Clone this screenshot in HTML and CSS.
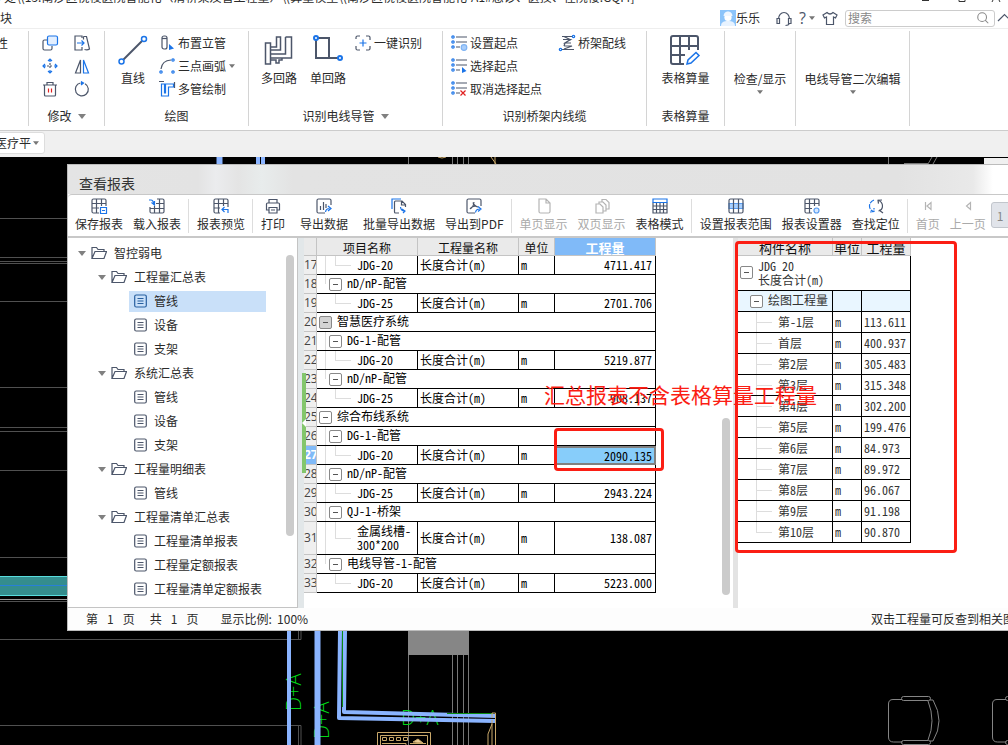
FILE: index.html
```html
<!DOCTYPE html>
<html lang="zh-CN">
<head>
<meta charset="utf-8">
<title>查看报表</title>
<link rel="stylesheet" href="styles.css">
</head>
<body>
<svg class="defs" aria-hidden="true">
  <symbol id="folder" viewBox="0 0 16 14"><path d="M1 12.500V1.500h4.500l1.500 2h6v2M1 12.500l3-7h11.500l-2.500 7z"/></symbol>
  <symbol id="doc" viewBox="0 0 13 14"><rect x=".7" y="1" width="11.600" height="12" rx="1.500"/><path d="M3.500 4.500h6M3.500 7h6M3.500 9.500h6"/></symbol>
  <symbol id="down" viewBox="0 0 8 5"><path d="M0 0h8L4 5z"/></symbol>
  <symbol id="start" viewBox="0 0 16 16"><path d="M5 2h11M5 7h11M5 12h4"/><g class="blue"><circle cx="2" cy="2" r="1.200"/><circle cx="2" cy="7" r="1.200"/><circle cx="2" cy="12" r="1.200"/></g></symbol>
</svg>

<header class="titlebar">
  <div class="path">步处\(15.南沙区桡棱医院智能化（清桥架及管工程量）\(算量模型\(南沙区桡棱医院智能化-A1#急诊、医技、住院楼.GQI4]</div>
  <div class="menu-row">
    <span class="menu-tab">块</span>
    <div class="account">
      <svg class="avatar" viewBox="0 0 16 16"><rect width="16" height="16" fill="#8cc4fa"/><path d="M1 16c0-4 3-5 7-5s7 1 7 5z" fill="#e8f3ff"/><circle cx="8" cy="7.500" r="3.600" fill="#fff"/><path d="M3.500 6C4 2.500 6 1.500 8 1.500S12 2.500 12.500 6z" fill="#eef6ff"/></svg>
      <span class="user">乐乐</span>
      <button class="plain" aria-label="客服"><svg class="ic" viewBox="0 0 16 16"><path d="M2.500 9a5.500 6.500 0 0 1 11 0M1 8.500h2.500v5H1zM12.500 8.500H15v5h-2.500zM13.500 13.500q-1 2-4 2"/></svg></button>
      <button class="plain help" aria-label="帮助">?<svg class="tri" aria-hidden="true"><use href="#down"/></svg></button>
      <button class="plain" aria-label="皮肤"><svg class="ic" viewBox="0 0 16 16"><path d="M5 2.500q3 3 6 0l4 2.500-1.500 3-2-1v7.500h-7V7l-2 1L1 5z"/></svg></button>
      <label class="search"><input type="text" placeholder="搜索" aria-label="搜索"><svg class="ic" viewBox="0 0 16 16"><circle cx="7" cy="7" r="5"/><path d="M10.500 10.500l3.500 3.500"/></svg></label>
      <button class="plain fold" aria-label="收起"><svg class="ic" viewBox="0 0 16 16"><path d="M1 11l6.500-6.500L14 11"/></svg></button>
    </div>
  </div>
  <svg class="winctl" viewBox="0 0 90 4"><path d="M4 .5h7M41 0v1.500h6V0M75 0l-1 2M81 0l1 2"/></svg>
</header>

<section class="ribbon">
  <div class="group g-prop"><div class="tools"><button class="row">性</button></div></div>
  <div class="group g-edit">
    <div class="tools edit-grid">
      <button class="plain" aria-label="复制"><svg class="ic" viewBox="0 0 16 16"><path d="M5 5H2.500Q1 5 1 6.500v7Q1 15 2.500 15h6q1.500 0 1.500-1.500V11"/><rect class="blue" x="5.500" y="1" width="10" height="9" rx="1.500" fill="#e3efff"/></svg></button>
      <button class="plain" aria-label="延伸"><svg class="ic" viewBox="0 0 16 16"><path d="M8 3V1H1v14h7v-3M9.500 1.500h3l3 12.500q-2 1.500-5 .5M9.500 1.500v3"/><path class="blue" d="M3 8h7M7.500 5.500L10 8l-2.500 2.500"/></svg></button>
      <button class="plain" aria-label="移动"><svg class="ic" viewBox="0 0 16 16"><path d="M8 5v6M5 8h6" stroke-dasharray="2 1"/><path class="blue" d="M8 1v3M8 12v3M1 8h3M12 8h3M6 3l2-2 2 2M6 13l2 2 2-2M3 6L1 8l2 2M13 6l2 2-2 2"/></svg></button>
      <button class="plain" aria-label="镜像"><svg class="ic" viewBox="0 0 16 16"><path d="M6.500 2v13H1.500z"/><path class="blue" d="M9.500 2v13h5z"/></svg></button>
      <button class="plain" aria-label="删除"><svg class="ic" viewBox="0 0 16 16"><path d="M1 4h14M5 4V1.500h6V4M2.500 4v10q0 1 1 1h9q1 0 1-1V4"/><path class="red" d="M6.500 7.500v4M9.500 7.500v4"/></svg></button>
      <button class="plain" aria-label="旋转"><svg class="ic" viewBox="0 0 16 16"><path d="M11 2.700A6.500 6.500 0 1 1 6.500 2"/><path class="blue" d="M7 .5l2.500 1.500L7 4" fill="#1b6fe0"/></svg></button>
    </div>
    <div class="caption">修改<svg class="tri big"><use href="#down"/></svg></div>
  </div>
  <div class="group g-draw">
    <div class="tools">
      <button class="tall"><svg class="ic lg" viewBox="0 0 30 30"><path d="M5 25L24 6"/><g class="blue thin" fill="#fff"><circle cx="3.500" cy="26.500" r="2.500"/><circle cx="26" cy="4" r="2.500"/></g></svg>直线</button>
      <div class="stack">
        <button class="row"><svg class="ic" viewBox="0 0 16 16"><rect x="3" y="1" width="5" height="13" rx="2"/><path d="M3 3.500h5"/><path class="solid" d="M10 9v6l5-1.500z"/></svg>布置立管</button>
        <button class="row"><svg class="ic" viewBox="0 0 16 16"><path d="M2 11q1-8.500 10-9"/><g class="blue"><circle cx="2" cy="14" r="1.200"/><circle cx="14" cy="2" r="1.200"/><circle cx="14" cy="14" r="1.200"/></g></svg>三点画弧<svg class="tri"><use href="#down"/></svg></button>
        <button class="row"><svg class="ic" viewBox="0 0 16 16"><path d="M0 .5h5M15.500 1v6"/><path class="blue" d="M2.500 3v12h7V6h5V3h-8v9h-1V3z"/></svg>多管绘制</button>
      </div>
    </div>
    <div class="caption">绘图</div>
  </div>
  <div class="group g-wire">
    <div class="tools">
      <button class="tall"><svg class="ic lg thin" viewBox="0 0 30 30"><path d="M1.500 8h5v21h-5zM6.500 12h6V2h4v13h-10M21.500 2h6v21h-9.500M6.500 19h15V2M6.500 23h11.500v2h-3v3h-3v-3H6.500"/></svg>多回路</button>
      <button class="tall"><svg class="ic lg" viewBox="0 0 30 30"><path d="M3 5v18h13V3H5M16 23h9"/><g class="blue" fill="#fff"><circle cx="3" cy="3" r="2"/><circle cx="27" cy="23" r="2"/></g></svg>单回路</button>
      <div class="stack"><button class="row"><svg class="ic" viewBox="0 0 16 16"><path d="M1 4V2.500Q1 1 2.500 1H5M11 1h2.500Q15 1 15 2.500V5M15 11v2.500q0 1.500-1.500 1.500H11M5 15H2.500Q1 15 1 13.500V11"/><path class="blue" d="M8 4.500v7M4.500 8h7"/></svg>一键识别</button></div>
    </div>
    <div class="caption">识别电线导管<svg class="tri big"><use href="#down"/></svg></div>
  </div>
  <div class="group g-tray">
    <div class="tools">
      <div class="stack">
        <button class="row"><svg class="ic" viewBox="0 0 16 16"><use href="#start"/><circle cx="13" cy="12.500" r="2.800" fill="#a8cdfa" stroke="#7db2f3"/></svg>设置起点</button>
        <button class="row"><svg class="ic" viewBox="0 0 16 16"><use href="#start"/><path class="solid" d="M11 9v6l4.500-2z"/></svg>选择起点</button>
        <button class="row"><svg class="ic" viewBox="0 0 16 16"><use href="#start"/><path class="red" d="M9.500 9.500l5 5M14.500 9.500l-5 5"/></svg>取消选择起点</button>
      </div>
      <div class="stack"><button class="row"><svg class="ic" viewBox="0 0 16 16"><path d="M3 1.500h10M5 1.500L12 5M4 4.500h7.500L6 8h6M5 11h8L5 14M2 14.500h13M6 8l-1 3"/><g class="blue"><circle cx="14.500" cy="1.500" r="1.200"/><circle cx="1.500" cy="14.500" r="1.200"/></g></svg>桥架配线</button></div>
    </div>
    <div class="caption">识别桥架内线缆</div>
  </div>
  <div class="group g-sheet">
    <div class="tools"><button class="tall"><svg class="ic lg" viewBox="0 0 30 30"><path d="M14 29H3Q1 29 1 27V3Q1 1 3 1h23q2 0 2 2v12M1 11h27M1 20h14M10 1v28M19 1v14"/><path class="blue thin" d="M17 29l1-4 8-7.500 3 3-8 7.500z"/></svg>表格算量</button></div>
    <div class="caption">表格算量</div>
  </div>
  <div class="group g-check"><button class="menu">检查/显示<svg class="tri"><use href="#down"/></svg></button></div>
  <div class="group g-second"><button class="menu">电线导管二次编辑<svg class="tri"><use href="#down"/></svg></button></div>
</section>

<div class="subbar"><button class="layer">医疗平<svg class="tri"><use href="#down"/></svg></button></div>

<main class="canvas">
  <svg class="drawing" viewBox="0 157 1008 588" width="1008" height="588" aria-hidden="true">
    <g fill="none" stroke="#505050">
      <path d="M0 218.500h68M0 257.500h68M0 261.500h68M0 263.500h68M0 301.500h68M0 387.500h68M0 427.500h68M0 431.500h68M0 470.500h68M0 557.500h68M0 601.500h68M0 639.500h301V630M298.500 630v9M0 725.500h301V745M298.500 726v19"/>
      <path d="M408.500 157v8M408.500 655v90M452.500 157v8M452.500 655v90M457.500 157v8M457.500 655v90M463.500 157v8M463.500 655v90M468.500 157v8M468.500 630v115M888.500 157v8M904 163.500h24M928 164l4-7M933 164l4-7" stroke="#777"/>
    </g>
    <path d="M0 576h68v20H0z" fill="#348d8d"/><path d="M0 576.500h68M0 595.500h68" stroke="#58dddd"/><path d="M0 585.500h68" stroke="#287fd8"/><path d="M0 599.500h68" stroke="#999"/>
    <path d="M408 630h61v25h-61z" fill="#868686"/>
    <path d="M984 158h24v8h-24z" fill="#f0f0f0"/>
    <g class="cad-label">
      <text transform="translate(301 711) rotate(-90)">D+A</text>
      <text transform="translate(329 739) rotate(-90)">D+A</text>
      <text x="401" y="725">D+A</text>
    </g>
    <g fill="none" stroke="#8ab4ff" stroke-width="4" stroke-linejoin="round">
      <path d="M289 630v115M340 630l-1 88 156 3M345 630l-1 82 152 4M258 157v8M263 157v8"/><path d="M317.500 630v115M219.500 157v8" stroke-width="6"/>
    </g>
    <path d="M342.500 630v77M447 713.500h46" stroke="#0a8a10"/>
    <g fill="none" stroke="#c9a86a">
      <path d="M377.500 745v-12.500h53V745M380.500 745v-9.500h47V745M382 743.500h24v2M410 743.500h16M495.500 745v-32h-3.500v5M492 724l-4 10v11M492 720v25M491 157l5 7M495 157v8"/>
      <path d="M382.500 737.500h4v3h-4zM389.500 737.500h4v3h-4zM396.500 737.500h4v3h-4zM403.500 737.500h4v3h-4z"/><path d="M413 742l5-3 5 4z" fill="#e8cd9a"/><path d="M438 157q4 2 8 0"/>
    </g>
    <g fill="none" stroke="#858585">
      <g id="chair"><path d="M902 699.500h-9q-4.500 0-4.500 4.500v33q0 5 5 5h9"/><rect x="901.500" y="696.500" width="29" height="4" rx="2"/><rect x="901.500" y="740.500" width="29" height="4" rx="2"/><path d="M928 701q8 20 0 39M930 700h3q12 21 0 41h-3"/></g>
      <use href="#chair" x="104"/>
    </g>
  </svg>

  <section class="dialog" aria-label="查看报表">
    <h1 class="dialog-title">查看报表</h1>
    <div class="toolbar">
      <button class="tool"><svg class="ic" viewBox="0 0 16 16"><path d="M8 15H2.500Q1 15 1 13.500v-11Q1 1 2.500 1h11Q15 1 15 2.500V8M1 5.500h14M1 10h7M5.500 1v14M10.500 1v7"/><path class="blue" d="M9.500 9.500h6v6h-6zM11 12.500h3"/></svg>保存报表</button>
      <button class="tool"><svg class="ic" viewBox="0 0 16 16"><path d="M8 1h5.500Q15 1 15 2.500v11q0 1.500-1.500 1.500h-11Q1 15 1 13.500V9M7 5.500h8M1 10.500h14M5.500 8v7M10.500 1v14"/><path class="blue" d="M0 2h2q2 0 3 4M2.500 4.500L5.500 7V3"/></svg>载入报表</button>
      <i class="sep"></i>
      <button class="tool"><svg class="ic" viewBox="0 0 16 16"><path d="M7 15H2.500Q1 15 1 13.500v-11Q1 1 2.500 1h11Q15 1 15 2.500V9M1 5.500h14M1 10h6M5.500 1v14M10.500 1v7"/><path class="blue" d="M15 15v-3.500H9M11.500 9L9 11.500l2.500 2.500"/></svg>报表预览</button>
      <i class="sep"></i>
      <button class="tool print"><svg class="ic" viewBox="0 0 16 16"><path d="M4 5V1.500h8V5M4 12H1.500V6Q1.500 5 2.500 5h11q1 0 1 1v6H12M4 9.500h8V15H4zM6 12h4"/></svg>打印</button>
      <button class="tool export"><svg class="ic" viewBox="0 0 16 16"><path d="M9 15H2.500Q1 15 1 13.500v-11Q1 1 2.500 1h11Q15 1 15 2.500V7M4.500 12V8M7.500 12V4M10 10V6"/><path class="blue" d="M9.500 14q.5-3.500 4-3.500M12 8l3 2.500-3 2.500"/></svg>导出数据</button>
      <button class="tool"><svg class="ic" viewBox="0 0 16 16"><path class="blue" d="M1 11V1h9"/><path d="M8 15H4.500q-1 0-1-1V4q0-1 1-1H11l3.500 3.500V9M10.500 3v4h4"/><path class="blue" d="M9.500 9q.5 4 4 4M11 11l3 2-2 2"/></svg>批量导出数据</button>
      <button class="tool"><svg class="ic" viewBox="0 0 16 16"><path d="M9 15H2.500Q1 15 1 13.500v-11Q1 1 2.500 1h11Q15 1 15 2.500V8M4 11q3-1 4-7M7 4.500Q8 8 12 9M4 11q2-3 6-3"/><path class="blue" d="M9.500 14.500q.5-3.500 4-3.500M12 8.500l3 2.500-3 2.500"/></svg>导出到PDF</button>
      <i class="sep"></i>
      <button class="tool" disabled><svg class="ic" viewBox="0 0 16 16"><path d="M3 1h7l4 4v8.500q0 1.500-1.500 1.500h-8Q3 15 3 13.500zM10 1v4h4"/></svg>单页显示</button>
      <button class="tool" disabled><svg class="ic" viewBox="0 0 16 16"><path d="M2 6h4l3 3v6H2zM5 6V4h4l3 3v6H9M8 4V1.500h4l3 3V11h-3"/></svg>双页显示</button>
      <button class="tool"><svg class="ic" viewBox="0 0 16 16"><path d="M1 4.500V15h14V4.500M1 8h14M1 11.500h14M4.500 4v11M8 4v11M11.500 4v11"/><path class="blue" d="M1 4.500V1h14v3.500z"/></svg>表格模式</button>
      <i class="sep"></i>
      <button class="tool"><svg class="ic" viewBox="0 0 16 16"><path d="M1 5.500h14v5H1z" fill="#a8d0ff" stroke="#5b9df0"/><rect x="1" y="1" width="14" height="14" rx="1.500"/><path d="M5.500 1v14M10.500 1v14"/></svg>设置报表范围</button>
      <button class="tool"><svg class="ic" viewBox="0 0 16 16"><path d="M8 15H2.500Q1 15 1 13.500v-11Q1 1 2.500 1h11Q15 1 15 2.500V8M1 5.500h14M1 10.500h7M5.500 1v14M10.500 1v7"/><circle cx="12.500" cy="12.500" r="2.500" fill="#d6e8ff" stroke="#5b9df0"/></svg>报表设置器</button>
      <button class="tool"><svg class="ic" viewBox="0 0 16 16"><path class="blue" d="M6 2Q1.500 4 1.500 8t4 5.500M2 14l4-.5V10" stroke-dasharray="5 1"/><path d="M10 2q4.500 2 4.500 6t-4 5M14 2l-4 .200.500 3.500M11 12l4 3"/></svg>查找定位</button>
      <i class="sep"></i>
      <button class="tool" disabled><svg class="ic" viewBox="0 0 16 16"><path d="M5.500 4v8M11 4.500v7L7 8z"/></svg>首页</button>
      <button class="tool" disabled><svg class="ic" viewBox="0 0 16 16"><path d="M10.500 4.500v7L6.500 8z"/></svg>上一页</button>
      <input class="page-no" type="text" value="1" aria-label="页码" disabled>
    </div>

    <div class="body">
      <nav class="tree">
        <ul>
          <li class="l0"><svg class="tri big"><use href="#down"/></svg><svg class="folder"><use href="#folder"/></svg>智控弱电</li>
          <li class="l1"><svg class="tri big"><use href="#down"/></svg><svg class="folder"><use href="#folder"/></svg>工程量汇总表</li>
          <li class="l2 active"><a href="#r1"><svg class="doc"><use href="#doc"/></svg>管线</a></li>
          <li class="l2"><a href="#r2"><svg class="doc"><use href="#doc"/></svg>设备</a></li>
          <li class="l2"><a href="#r3"><svg class="doc"><use href="#doc"/></svg>支架</a></li>
          <li class="l1"><svg class="tri big"><use href="#down"/></svg><svg class="folder"><use href="#folder"/></svg>系统汇总表</li>
          <li class="l2"><a href="#r4"><svg class="doc"><use href="#doc"/></svg>管线</a></li>
          <li class="l2"><a href="#r5"><svg class="doc"><use href="#doc"/></svg>设备</a></li>
          <li class="l2"><a href="#r6"><svg class="doc"><use href="#doc"/></svg>支架</a></li>
          <li class="l1"><svg class="tri big"><use href="#down"/></svg><svg class="folder"><use href="#folder"/></svg>工程量明细表</li>
          <li class="l2"><a href="#r7"><svg class="doc"><use href="#doc"/></svg>管线</a></li>
          <li class="l1"><svg class="tri big"><use href="#down"/></svg><svg class="folder"><use href="#folder"/></svg>工程量清单汇总表</li>
          <li class="l2"><a href="#r8"><svg class="doc"><use href="#doc"/></svg>工程量清单报表</a></li>
          <li class="l2"><a href="#r9"><svg class="doc"><use href="#doc"/></svg>工程量定额报表</a></li>
          <li class="l2"><a href="#r10"><svg class="doc"><use href="#doc"/></svg>工程量清单定额报表</a></li>
        </ul>
        <i class="thumb"></i>
      </nav>

      <div class="summary">
        <i class="drawer"></i>
        <table class="grid">
          <colgroup><col class="c-no"><col class="c-item"><col class="c-qty"><col class="c-unit"><col class="c-val"></colgroup>
          <thead><tr><th></th><th>项目名称</th><th>工程量名称</th><th>单位</th><th class="current">工程量</th></tr></thead>
          <tbody>
            <tr><th>17</th><td class="leaf rail">JDG-20</td><td>长度合计(m)</td><td>m</td><td>4711.417</td></tr>
            <tr><th>18</th><td class="sub end" colspan="4"><button class="toggle" aria-label="折叠"></button>nD/nP-配管</td></tr>
            <tr><th>19</th><td class="leaf">JDG-25</td><td>长度合计(m)</td><td>m</td><td>2701.706</td></tr>
            <tr><th>20</th><td class="top" colspan="4"><button class="toggle dark" aria-label="折叠"></button>智慧医疗系统</td></tr>
            <tr><th>21</th><td class="sub" colspan="4"><button class="toggle" aria-label="折叠"></button>DG-1-配管</td></tr>
            <tr><th>22</th><td class="leaf rail">JDG-20</td><td>长度合计(m)</td><td>m</td><td>5219.877</td></tr>
            <tr><th>23</th><td class="sub end" colspan="4"><button class="toggle" aria-label="折叠"></button>nD/nP-配管</td></tr>
            <tr><th>24</th><td class="leaf">JDG-25</td><td>长度合计(m)</td><td>m</td><td>908.137</td></tr>
            <tr><th>25</th><td class="top" colspan="4"><button class="toggle" aria-label="折叠"></button>综合布线系统</td></tr>
            <tr><th>26</th><td class="sub" colspan="4"><button class="toggle" aria-label="折叠"></button>DG-1-配管</td></tr>
            <tr><th class="current">27</th><td class="leaf rail">JDG-20</td><td>长度合计(m)</td><td>m</td><td class="selected">2090.135</td></tr>
            <tr><th>28</th><td class="sub" colspan="4"><button class="toggle" aria-label="折叠"></button>nD/nP-配管</td></tr>
            <tr><th>29</th><td class="leaf rail">JDG-25</td><td>长度合计(m)</td><td>m</td><td>2943.224</td></tr>
            <tr><th>30</th><td class="sub" colspan="4"><button class="toggle" aria-label="折叠"></button>QJ-1-桥架</td></tr>
            <tr class="double"><th>31</th><td class="leaf rail">金属线槽-<br>300*200</td><td>长度合计(m)</td><td>m</td><td>138.087</td></tr>
            <tr><th>32</th><td class="sub end" colspan="4"><button class="toggle" aria-label="折叠"></button>电线导管-1-配管</td></tr>
            <tr><th>33</th><td class="leaf">JDG-20</td><td>长度合计(m)</td><td>m</td><td>5223.000</td></tr>
          </tbody>
        </table>
        <i class="thumb"></i>
      </div>

      <div class="detail">
        <table class="grid">
          <colgroup><col class="d-name"><col class="d-unit"><col class="d-val"></colgroup>
          <thead><tr><th>构件名称</th><th>单位</th><th>工程量</th></tr></thead>
          <tbody>
            <tr class="part"><td colspan="3"><div class="part-name"><button class="toggle" aria-label="折叠"></button><span>JDG 20<br>长度合计(m)</span></div></td></tr>
            <tr class="kind"><td><button class="toggle" aria-label="折叠"></button>绘图工程量</td><td></td><td></td></tr>
            <tr><td>第-1层</td><td>m</td><td>113.611</td></tr>
            <tr><td>首层</td><td>m</td><td>400.937</td></tr>
            <tr><td>第2层</td><td>m</td><td>305.483</td></tr>
            <tr><td>第3层</td><td>m</td><td>315.348</td></tr>
            <tr><td>第4层</td><td>m</td><td>302.200</td></tr>
            <tr><td>第5层</td><td>m</td><td>199.476</td></tr>
            <tr><td>第6层</td><td>m</td><td>84.973</td></tr>
            <tr><td>第7层</td><td>m</td><td>89.972</td></tr>
            <tr><td>第8层</td><td>m</td><td>96.067</td></tr>
            <tr><td>第9层</td><td>m</td><td>91.198</td></tr>
            <tr class="last"><td>第10层</td><td>m</td><td>90.870</td></tr>
          </tbody>
        </table>
      </div>
    </div>

    <footer class="status">
      <span>第</span><span>1</span><span>页</span><span class="total">共</span><span>1</span><span>页</span><span class="scale">显示比例:&nbsp; 100%</span>
      <span class="hint">双击工程量可反查到相关图元</span>
    </footer>
    <i class="mark mark-cell"></i>
    <i class="mark mark-detail"></i>
    <p class="note">汇总报表不含表格算量工程量</p>
  </section>
</main>
</body>
</html>
```
FILE: styles.css
```css
* { box-sizing: border-box; }
body {
  margin: 0;
  height: 100vh;
  display: flex;
  flex-direction: column;
  overflow: hidden;
  background: #fff;
  color: #2b2b2b;
  font: 12px/18px "Noto Sans CJK SC", sans-serif;
}
button, input { font: inherit; color: inherit; }
button { border: 0; padding: 0; background: none; white-space: nowrap; }
svg { display: block; flex: none; }
i { display: block; }
.defs { position: absolute; width: 0; height: 0; }
.ic { width: 16px; height: 16px; fill: none; stroke: #4c566a; stroke-width: 1.200; overflow: visible; }
.ic.lg { width: 30px; height: 30px; stroke-width: 2; }
.ic.thin, .thin { stroke-width: 1.500; }
.blue { stroke: #1b74e8; }
.red { stroke: #e02020; }
.solid { fill: #1b74e8; stroke: none; }
.tri { width: 6px; height: 4px; fill: #777; }
.tri.big { width: 8px; height: 5px; fill: #808080; }

/* title */
.titlebar { position: relative; height: 29px; flex: none; overflow: hidden; border-bottom: 1px solid #eee; }
.path { margin: -12px 0 0 -8px; height: 18px; white-space: nowrap; }
.menu-row { display: flex; align-items: center; margin-top: 3px; height: 18px; }
.account { margin-left: auto; display: flex; align-items: center; }
.avatar { width: 16px; height: 16px; }
.user { margin-right: 16px; }
.account .plain { margin-right: 7px; }
.help { display: flex; align-items: center; gap: 3px; font: 16px/18px "Open Sans", sans-serif; color: #4c566a; }
.account .search { display: flex; align-items: center; width: 150px; height: 17px; padding: 0 4px 0 2px; border: 1px solid #ccc; border-radius: 3px; }
.search input { flex: 1; min-width: 0; height: 15px; padding: 0; border: 0; outline: 0; background: none; }
.search input::placeholder { color: #888; }
.search .ic { width: 14px; height: 14px; stroke: #888; }
.account .fold { margin: 0 -5px 0 2px; }
.winctl { position: absolute; top: 0; right: 0; width: 90px; height: 4px; fill: none; stroke: #333; }

/* ribbon */
.ribbon { display: flex; flex: none; height: 102px; padding: 2px 0 4px; border-bottom: 1px solid #ccc; overflow: hidden; }
.group { flex: none; display: flex; flex-direction: column; border-right: 1px solid #d4d4d4; }
.tools { display: flex; height: 70px; }
.caption { display: flex; justify-content: center; align-items: center; gap: 6px; height: 18px; margin-top: 6px; }
.stack { display: flex; flex-direction: column; }
.row { display: flex; align-items: center; gap: 3px; height: 23px; }
.tall { display: flex; flex-direction: column; align-items: center; gap: 4px; height: 58px; padding-top: 4px; }
.g-prop { width: 29px; }
.g-prop .row { margin-left: -4px; }
.g-edit { width: 76px; }
.edit-grid { display: grid; grid-template: repeat(3, 23px) / 16px 16px; column-gap: 16px; padding-left: 13px; align-items: center; }
.g-draw { width: 144px; }
.g-draw .tools { padding-left: 13px; gap: 11px; }
.g-wire { width: 194px; }
.g-wire .tools { padding-left: 12px; gap: 13px; }
.g-wire .stack { margin-left: -4px; }
.g-tray { width: 204px; }
.g-tray .tools { padding-left: 8px; gap: 17px; }
.g-sheet { width: 78px; }
.g-sheet .tools { justify-content: center; }
.g-check { width: 71px; }
.g-second { width: 114px; }
.menu { display: flex; flex-direction: column; align-items: center; gap: 2px; margin-top: 39px; }
.subbar { flex: none; height: 26px; padding-top: 1px; background: #f0f0f0; }
.layer { display: flex; align-items: center; gap: 2px; height: 22px; margin-left: -10px; padding: 0 5px 0 4px; border: 1px solid #ddd; border-radius: 3px; background: #fff; }

/* drawing area */
.canvas { position: relative; flex: 1; min-height: 0; padding: 7px 0 0 67px; background: #000; overflow: hidden; }
.drawing { position: absolute; left: 0; top: 0; }
.cad-label { fill: #00d818; font: 20px "Open Sans", sans-serif; font-weight: 300; }

/* report window */
.dialog { position: relative; margin-right: -40px; border: 1px solid #bcbcbc; background: #fff; }
.dialog-title {
  margin: 0; height: 29px; padding: 8px 11px 0;
  font-size: 14px; font-weight: 400; line-height: 20px; color: #333;
  background: linear-gradient(90deg, #e4e4e4 0, #e3e3e3 130px, #ebecee 148px, #e4e4e4 170px, #e8ecec 194px, #e3e3e3 225px, #e2e2e2 830px, #e9e9e9 905px, #fff 925px);
}
.toolbar { display: flex; height: 44px; padding: 3px 0 0 2px; border-top: 1px solid #c8c8c8; border-bottom: 2px solid #c8c8c8; border-radius: 4px 0 0 0; background: #fff; overflow: hidden; }
.tool { flex: none; display: flex; flex-direction: column; align-items: center; gap: 1px; padding: 0 5px; height: 36px; }
.tool.print, .tool.export { margin-right: 5px; }
.tool:disabled { color: #aaa; }
.tool:disabled .ic { stroke: #b4b4b4; }
.sep { flex: none; width: 1px; height: 34px; margin: 1px 3px 0 2px; background: #ddd; }
.page-no { flex: none; width: 40px; height: 26px; margin-top: 4px; padding: 0 5px; border: 1px solid #c2c6cc; border-radius: 3px; background: #e1e4ea; color: #888; }
.body { display: flex; background: #fff; }
.tree { flex: none; display: flex; width: 230px; padding: 3px 0 6px; border-right: 1px solid #c4c4c4; border-bottom: 1px solid #c4c4c4; }
.tree ul { flex: 1; margin: 0; padding: 0; list-style: none; }
.tree li { display: flex; align-items: center; height: 24px; }
.tree .tri { margin-right: 5px; }
.folder { width: 16px; height: 14px; margin-right: 7px; fill: none; stroke: #4c566a; stroke-width: 1.200; }
.doc { width: 13px; height: 14px; margin-right: 7px; fill: none; stroke: #4c566a; stroke-width: 1.200; }
.l0 { padding-left: 10px; }
.l1 { padding-left: 30px; }
.l2 { padding-left: 61px; }
.l2 a { display: flex; align-items: center; width: 137px; height: 21px; padding-left: 5px; color: inherit; text-decoration: none; white-space: nowrap; }
.l2.active a { background: #c9e0f9; }
.active .doc { stroke: #275f9f; }
.thumb { width: 8px; border-radius: 4px; background: #cbcbcb; }
.tree .thumb { height: 281px; margin: 14px 3px 0 0; }
.summary { position: relative; flex: none; display: flex; width: 440px; padding: 0 2px 0 0; border-left: 6px solid #e2e7e9; border-right: 5px solid #e3e3e3; }
.summary .thumb { height: 177px; margin: 180px 1px 0 auto; }
.drawer { position: absolute; z-index: 1; left: -2px; top: 135px; width: 4px; height: 100px; background: #83c66c; }
.drawer::after { content: ""; position: absolute; left: 0; top: 46px; border: 4px solid transparent; border-left: 0; border-right-color: #fff; }

/* tables */
.grid { table-layout: fixed; border-collapse: separate; border-spacing: 0; font-feature-settings: "hwid"; line-height: 14px; white-space: nowrap; }
.grid td, .grid th { padding: 0 3px 1px 2px; border-right: 1px solid #000; border-bottom: 1px solid #000; overflow: hidden; text-align: left; font-weight: 400; }
.grid thead th { height: 18px; padding: 2px 0 0; border-color: #c4c4c4; background: #eaeaea; text-align: center; color: #111; }
.toggle { display: inline-block; width: 13px; height: 13px; margin-right: 5px; border: 1px solid #888; border-radius: 2px; vertical-align: -2px; background: linear-gradient(#555, #555) center / 5px 1px no-repeat #fff; }
.toggle.dark { background-color: #d4d4d4; }
.summary .grid { width: 352px; height: 355px; color: #000; }
.c-no { width: 13px; }
.c-item { width: 101px; }
.c-qty { width: 101px; }
.c-unit { width: 36px; }
.c-val { width: 101px; }
.summary .grid td { height: 19px; }
.summary .grid .double td { height: 33px; }
.summary tbody th { padding: 0; border-color: #c4c4c4; background: #efefef; color: #444; font: 12px/16px "Open Sans", sans-serif; text-align: right; }
.summary .grid th.current { background: #80baf8; color: #fff; font-weight: 700; }
.summary thead th.current { font-size: 13px; }
.summary td:nth-child(5) { text-align: right; }
.summary .grid td.selected { border: 2px solid #808080; padding: 0 2px 0 0; background: #87cdfa; }
.summary .grid td.leaf {
  padding-left: 40px;
  background: linear-gradient(#ddd, #ddd) 18px 0 / 1px 50% no-repeat, linear-gradient(#ddd, #ddd) 18px 50% / 16px 1px no-repeat;
}
.summary .grid td.leaf.rail {
  background: linear-gradient(#ddd, #ddd) 18px 0 / 1px 50% no-repeat, linear-gradient(#ddd, #ddd) 18px 50% / 16px 1px no-repeat, linear-gradient(#ddd, #ddd) 8px 0 / 1px 100% no-repeat;
}
.summary .grid td.sub { padding-left: 12px; background: linear-gradient(#ddd, #ddd) 8px 0 / 1px 100% no-repeat; }
.summary .grid td.sub.end { background: linear-gradient(#ddd, #ddd) 8px 0 / 1px 50% no-repeat; }
.detail .grid { width: 173px; color: #333; }
.d-name { width: 95px; }
.d-unit { width: 29px; }
.d-val { width: 49px; }
.detail thead th { font-size: 13px; }
.detail .grid td { height: 21px; }
.detail .grid .part td { height: 35px; padding-left: 2px; }
.part-name { display: flex; align-items: center; }
.detail .grid tr:not(.part) td:first-child {
  padding-left: 40px;
  background: linear-gradient(#ddd, #ddd) 18px 0 / 1px 100% no-repeat, linear-gradient(#ddd, #ddd) 18px 50% / 16px 1px no-repeat;
}
.detail .grid tr.last td:first-child { background-size: 1px 50%, 16px 1px; }
.detail .grid tr.kind td { background: #e9f6ff; }
.detail .grid tr.kind td:first-child { padding: 0 0 1px 12px; background: #e9f6ff; }

.status { display: flex; align-items: center; gap: 9px; height: 22px; padding: 0 20px 0 18px; background: #fdfdfd; }
.status .total { margin-left: 6px; }
.status .scale { margin-left: 13px; }
.status .hint { margin-left: auto; }

/* annotations drawn over the window */
.mark { position: absolute; z-index: 2; border: 3px solid #fb1e14; border-radius: 4px; }
.mark-cell { left: 486px; top: 263px; width: 110px; height: 43px; }
.mark-detail { left: 667px; top: 76px; width: 222px; height: 312px; }
.note { position: absolute; z-index: 3; left: 476px; top: 214px; margin: 0; font-size: 21px; line-height: 30px; white-space: nowrap; color: #fb1e14; }
```
